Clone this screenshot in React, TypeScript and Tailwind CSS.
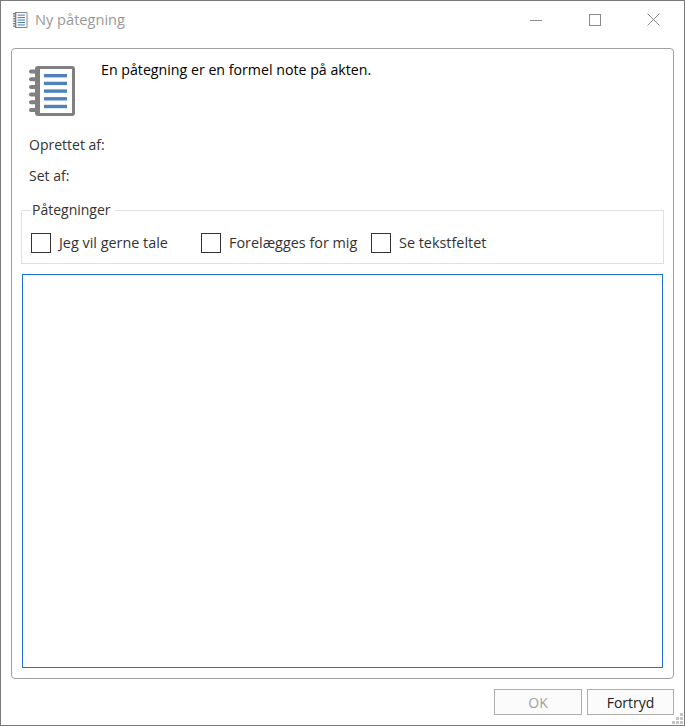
const NotebookIcon = ({ className }: { className: string }) => (
  <svg viewBox="0 0 47 50" className={className}>
    <rect x="7" y="0" width="40" height="50" rx="3" fill="#808080" />
    <rect x="12" y="3" width="32" height="44" fill="#ffffff" />
    {[8, 15.7, 23.4, 31.1, 38.8].map((y) => (
      <rect key={y} x="16" y={y} width="23" height="3.4" fill="#4f81bd" />
    ))}
    {[5.5, 13.2, 20.9, 28.6, 36.3, 44].map((y) => (
      <rect key={y} x="1" y={y - 2} width="8" height="4" rx="2" fill="#808080" />
    ))}
  </svg>
);

const CheckItem = ({ label }: { label: string }) => (
  <label className="flex w-[170px] items-center">
    <span className="h-5 w-5 border border-[#333333] bg-white" />
    <span className="ml-2 text-[14.4px] text-[#333333]">{label}</span>
  </label>
);

const App = () => {
  return (
    <div
      className="flex h-[726px] w-[685px] flex-col border border-[#7a7a7a] bg-white text-black"
      style={{ fontFamily: '"Open Sans", "Noto Sans", sans-serif' }}
    >
      {/* titel */}
      <div className="flex h-[37px] shrink-0 items-center pl-[11px]">
        <NotebookIcon className="h-[16px] w-[16px]" />
        <span className="ml-[7px] text-[14.6px] text-[#999999]">Ny påtegning</span>
        <div className="ml-auto flex items-center pr-[24px] text-[#8a8a8a]">
          <svg width="12" height="12" viewBox="0 0 12 12" className="mr-[47px]">
            <path d="M0 6.5h12" stroke="currentColor" />
          </svg>
          <svg width="12" height="12" viewBox="0 0 12 12" className="mr-[46px]">
            <rect x="0.5" y="0.5" width="11" height="11" fill="none" stroke="currentColor" />
          </svg>
          <svg width="13" height="13" viewBox="0 0 13 13">
            <path d="M0.5 0.5l12 12M12.5 0.5l-12 12" stroke="currentColor" fill="none" />
          </svg>
        </div>
      </div>

      {/* indhold */}
      <div className="mx-[10px] mt-[10px] flex h-[631px] flex-col rounded-[4px] border border-[#a0a0a0] px-[9px] pt-[17px] pb-[10px]">
        <div className="flex">
          <NotebookIcon className="ml-[7px] h-[50px] w-[47px]" />
          <p className="ml-[26px] -mt-[6px] text-[14.2px] leading-[20px]">En påtegning er en formel note på akten.</p>
        </div>
        <div className="mt-[19px] ml-[8px] text-[14px] leading-[20px] text-[#333333]">Oprettet af:</div>
        <div className="mt-[11px] ml-[8px] text-[14px] leading-[20px] text-[#333333]">Set af:</div>

        <fieldset className="mt-[16px] h-[62px] border border-[#e0e0e0] pl-[9px]">
          <legend className="pr-[4px] pl-[1px] text-[14px] leading-[16px] text-[#333333]">Påtegninger</legend>
          <div className="mt-[14px] flex">
            <CheckItem label="Jeg vil gerne tale" />
            <CheckItem label="Forelægges for mig" />
            <CheckItem label="Se tekstfeltet" />
          </div>
        </fieldset>

        <div className="mx-[1px] mt-[10px] min-h-0 flex-1 border border-[#1f74d2]" />
      </div>

      {/* knapper */}
      <div className="relative flex flex-1 items-start justify-end gap-[5px] pt-[10px] pr-[10px]">
        <button className="h-[26px] w-[88px] border border-[#adadad] bg-[#fbfbfb] text-[14px] text-[#a0a0a0]">OK</button>
        <button className="h-[26px] w-[87px] border border-[#adadad] bg-[#fbfbfb] text-[14px] text-[#222222]">Fortryd</button>
        <svg width="12" height="12" viewBox="0 0 12 12" className="absolute right-0 bottom-0 text-[#c4c4c4]">
          <path d="M8 0h3v3H8zM4 4h3v3H4zM8 4h3v3H8zM0 8h3v3H0zM4 8h3v3H4zM8 8h3v3H8z" fill="currentColor" />
        </svg>
      </div>
    </div>
  );
};

export default App;
